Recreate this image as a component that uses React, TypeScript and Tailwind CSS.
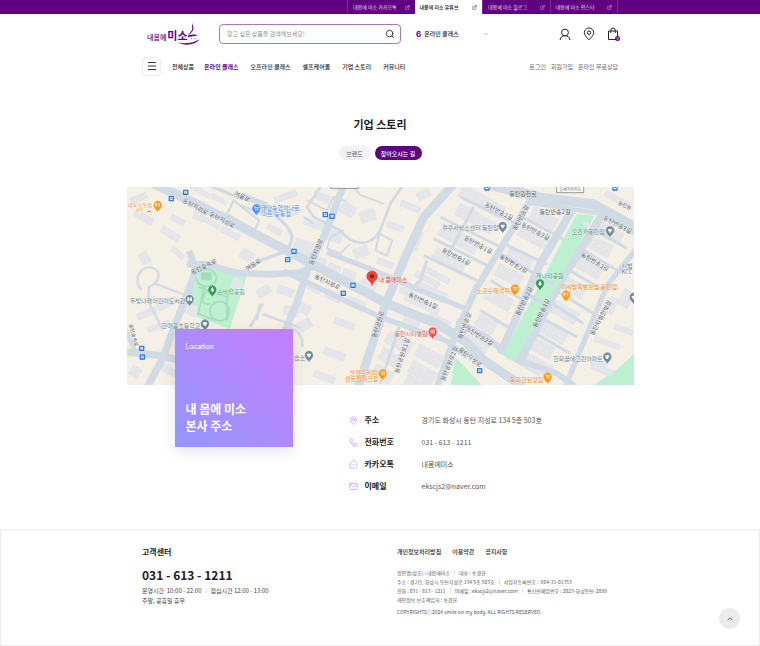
import type { ReactNode } from "react";
import { ChevronDown, ChevronUp, ExternalLink, Mail, MapPin, MessageCircleMore, Phone, Search } from "lucide-react";

const CHANNELS = [
  { label: "내몸에 미소 카카오톡", active: false },
  { label: "내몸에 미소 유튜브", active: true },
  { label: "내몸에 미소 블로그", active: false },
  { label: "내몸에 미소 인스타", active: false },
];

const MENU = ["온라인 클래스", "오프라인 클래스", "셀프케어몰", "기업 스토리", "커뮤니티"];

/* ---------- map data, 3 units per pixel ---------- */

const MAIN_ROADS: [string, number][] = [
  ["M60 -20L190 42L330 112L519 212L780 350L930 410L1014 462L1070 520L1190 600", 28],
  ["M186 192L196 216L188 232L240 232L330 258L430 262L520 256L556 240", 20],
  ["M212 236L172 344L130 450L112 504L56 610", 22],
  ["M-10 494L100 506L200 530L330 560", 22],
  ["M652 -10L590 150L548 230L512 340L430 540", 22],
  ["M990 -20L890 90L835 210L778 345L690 610", 26],
  ["M600 196L740 250L910 322L1014 364", 16],
  ["M470 252L640 334L770 394L960 462L1020 510", 16],
  ["M1075 -10L1240 32L1400 52L1540 130", 30],
  ["M1214 34L1140 154L1050 300L990 430L930 600", 20],
  ["M1334 72L1240 230L1120 500", 24],
  ["M1425 84L1300 284L1175 530", 24],
  ["M1214 48L1330 66L1425 80L1540 150", 14],
  ["M1540 170L1440 296L1310 610", 16],
  ["M990 400L1080 450L1150 510L1290 560L1360 610", 18],
];

const SIDE_ROADS: [string, number][] = [
  ["M44 310C10 270 50 230 80 244C110 260 90 290 66 300L64 344L108 430", 7],
  ["M84 290L174 324", 7],
  ["M240 -8L330 30C380 40 420 50 450 90C500 130 510 160 470 196L400 220L362 246", 10],
  ["M320 40L300 82L384 130L396 100Z", 7],
  ["M345 20L420 50L400 80L340 54", 7],
  ["M408 350L370 420M408 382L520 422M400 350L388 400", 8],
  ["M586 -8L540 60L560 90L640 130C680 180 730 180 760 130L790 50L830 -8", 8],
  ["M672 -8L700 24L770 50M650 130L610 150L600 184L640 200L670 170", 6],
  ["M756 140L796 160L780 206L746 190Z", 6],
  ["M540 40L600 70L620 30L660 44M530 90L560 110", 6],
  ["M-10 420L20 480L30 505", 14],
  ["M489 420C510 430 530 450 526 480", 8],
  ["M900 220L880 280L860 300", 10],
  ["M1000 30L1170 112M940 90L1120 180M920 155L1090 240M890 205L1050 280", 9],
  ["M1184 88L1310 158M1130 170L1260 232M1120 200L1240 270M1090 280L1190 340M1060 370L1150 425", 9],
  ["M1390 120L1500 184M1360 184L1470 250M1310 240L1430 310M1270 300L1400 380", 9],
  ["M1230 320L1370 410M1220 380L1350 450M1210 430L1330 500", 9],
  ["M1440 84L1530 140M820 410L760 590M930 440L1000 500M1040 60L960 210", 9],
];

// x, y, columns, rows of each block of houses
const HOUSES: [number, number, number, number][] = [
  [1010, -8, 7, 2], [1000, 48, 6, 2], [950, 108, 6, 2], [930, 180, 5, 2], [900, 238, 4, 1],
  [1224, 58, 4, 2], [1190, 110, 5, 2], [1150, 180, 4, 2], [1120, 228, 4, 2], [1090, 300, 4, 2],
  [1060, 380, 3, 2], [1420, 100, 4, 2], [1390, 140, 4, 2], [1360, 204, 4, 2], [1310, 262, 4, 2],
  [1270, 330, 5, 2], [1236, 390, 5, 2], [1214, 444, 4, 2], [1190, 490, 5, 2], [1440, 10, 4, 1],
  [870, 250, 4, 1], [790, 430, 4, 2], [770, 480, 3, 2], [750, 530, 3, 2], [880, 470, 4, 2],
  [860, 520, 4, 2], [845, 560, 4, 2], [1020, 430, 4, 2],
];

// x, y, width, height, rotation
const BLOCKS: [number, number, number, number, number][] = [
  [10, 24, 50, 18, -22], [20, 80, 60, 22, 30], [130, 90, 44, 18, 28], [200, 70, 34, 30, 20], [190, 6, 60, 14, 28],
  [230, 100, 50, 16, 28], [280, 130, 60, 18, 28], [100, 130, 60, 22, 32], [36, 200, 34, 26, 60], [130, 190, 46, 16, 40],
  [90, 340, 60, 20, -26], [30, 370, 60, 18, -24], [60, 410, 70, 16, -20], [10, 540, 30, 30, 30], [100, 540, 50, 20, 30],
  [390, 300, 40, 26, -30], [450, 300, 50, 24, 20], [470, 360, 44, 26, 10], [340, 190, 40, 30, 30], [420, 120, 44, 16, 28],
  [480, 60, 40, 24, -30], [440, 20, 70, 18, -20], [250, 30, 50, 14, 28], [530, 100, 60, 22, 20], [500, 160, 56, 40, 20],
  [560, 20, 50, 22, 20], [640, 50, 44, 34, 30], [700, 70, 44, 34, -20], [600, 130, 44, 34, 20], [680, 180, 44, 30, -20],
  [750, 220, 50, 18, 20], [780, 110, 50, 18, 20], [820, 50, 60, 18, 24], [850, 130, 30, 60, 20], [870, 10, 40, 24, -30],
  [560, 210, 36, 30, 24], [600, 232, 40, 30, 24], [644, 250, 40, 30, 24], [700, 280, 46, 30, 24], [540, 290, 44, 24, 24],
  [596, 314, 48, 26, 24], [656, 336, 60, 28, 24], [510, 350, 40, 28, 30], [510, 400, 44, 30, -30], [620, 400, 64, 20, 20],
  [590, 490, 66, 22, 20], [560, 560, 64, 20, 20], [820, 300, 40, 24, 24], [860, 300, 100, 30, 24], [830, 340, 110, 22, 24],
  [900, 390, 70, 26, 24], [830, 390, 50, 24, 24], [1160, 510, 90, 36, 30], [1010, 470, 50, 40, 30], [1400, 460, 80, 16, 20],
  [1460, 420, 60, 16, 20], [1390, 540, 70, 18, 20], [1480, 310, 34, 50, 30], [1440, 330, 26, 50, 26], [1390, 520, 50, 16, 20],
];

type Label = { x: number; y: number; t: string; r?: number; c?: string; s?: number };

const SLATE = "#6b8797";
const ORANGE = "#f08a17";

const LABELS: Label[] = [
  { x: 206, y: 58, t: "동탄지성로", r: 28 },
  { x: 286, y: 98, t: "동탄지성로", r: 28 },
  { x: 346, y: 28, t: "여울로", r: 26 },
  { x: 230, y: 238, t: "동탄숲속로", r: -26 },
  { x: 378, y: 232, t: "여울로", r: -34 },
  { x: 22, y: 444, t: "동탄숲속로", r: 74, s: 15 },
  { x: 566, y: 194, t: "동탄지성로", r: -68 },
  { x: 602, y: 284, t: "동탄지성로", r: 25 },
  { x: 888, y: 340, t: "동탄반송1길", r: 25 },
  { x: 752, y: 412, t: "동탄공원로", r: -72 },
  { x: 824, y: 506, t: "동탄공원로1길", r: -72 },
  { x: 966, y: 530, t: "동탄공원로2길", r: -68 },
  { x: 988, y: 208, t: "동탄반송1길", r: 27 },
  { x: 1188, y: 18, t: "동탄원천로" },
  { x: 1116, y: 72, t: "동탄반송1길", r: 28 },
  { x: 1054, y: 172, t: "동탄반송1길", r: 28 },
  { x: 1180, y: 92, t: "동탄반송길", r: -62 },
  { x: 1284, y: 74, t: "동탄반송2길" },
  { x: 1226, y: 132, t: "동탄반송2길", r: 28 },
  { x: 1160, y: 230, t: "동탄반송2길", r: 30 },
  { x: 1472, y: 112, t: "동탄반송3길", r: 28 },
  { x: 1404, y: 224, t: "동탄반송3길", r: 30 },
  { x: 1190, y: 342, t: "동탄반송2길", r: -64 },
  { x: 1242, y: 378, t: "동탄반송3길", r: -64 },
  { x: 1420, y: 392, t: "동탄지범한빛길", r: -62 },
  { x: 1058, y: 446, t: "동탄반송2길", r: 32 },
  { x: 1012, y: 416, t: "동탄반송길", r: -70 },
  { x: 1030, y: 510, t: "동탄지성로", r: 38 },
  { x: 1494, y: 54, t: "동탄원", r: 24, s: 15 },
  { x: 39, y: 53, t: "대국 능동점", c: ORANGE, s: 15 },
  { x: 50, y: 70, t: "한식 · ▬", c: ORANGE, s: 12 },
  { x: 460, y: 60, t: "태안농협하나로", c: "#4b86ee" },
  { x: 448, y: 78, t: "마트 능동점", c: "#4b86ee" },
  { x: 312, y: 312, t: "손바닥공원", c: "#5c9f74" },
  { x: 92, y: 341, t: "두빛나래어린이도서관", c: SLATE },
  { x: 162, y: 416, t: "한마음초등학교", c: SLATE },
  { x: 510, y: 510, t: "휴습소", c: SLATE },
  { x: 798, y: 277, t: "내 몸에미소", c: "#e53935" },
  { x: 852, y: 438, t: "동탄시티병원", c: "#e8564e" },
  { x: 710, y: 557, t: "블렌드커피", c: ORANGE },
  { x: 704, y: 574, t: "센트럴파크점", c: ORANGE },
  { x: 1030, y: 121, t: "쿠쿠서비스센터 동탄점", c: SLATE },
  { x: 1384, y: 134, t: "오즈카동탄점", c: SLATE },
  { x: 1268, y: 264, t: "개나리공원", c: "#40966a" },
  { x: 1099, y: 311, t: "노곤수제맥주", c: ORANGE },
  { x: 1386, y: 298, t: "이서방족발보쌈 동탄점", c: ORANGE },
  { x: 1353, y: 514, t: "한화꿈에그린아파트", c: SLATE },
  { x: 1199, y: 576, t: "육회한된장집", c: ORANGE },
  { x: 1500, y: 234, t: "시범", c: SLATE },
  { x: 1500, y: 252, t: "KCC", c: SLATE },
];

type Glyph = "food" | "cart" | "tree" | "dot" | "book" | "hospital";

const PINS: { x: number; y: number; c: string; g: Glyph }[] = [
  { x: 92, y: 56, c: "#f79a1c", g: "food" },
  { x: 388, y: 66, c: "#5491f5", g: "cart" },
  { x: 256, y: 310, c: "#2e9e52", g: "tree" },
  { x: 188, y: 338, c: "#718b9b", g: "book" },
  { x: 234, y: 412, c: "#718b9b", g: "dot" },
  { x: 546, y: 506, c: "#718b9b", g: "dot" },
  { x: 767, y: 561, c: "#f79a1c", g: "cart" },
  { x: 917, y: 436, c: "#ea4b43", g: "hospital" },
  { x: 1127, y: 119, c: "#718b9b", g: "dot" },
  { x: 1449, y: 132, c: "#718b9b", g: "dot" },
  { x: 1239, y: 291, c: "#2e9e52", g: "tree" },
  { x: 1164, y: 307, c: "#f79a1c", g: "cart" },
  { x: 1317, y: 325, c: "#f79a1c", g: "food" },
  { x: 1441, y: 511, c: "#718b9b", g: "dot" },
  { x: 1262, y: 571, c: "#f79a1c", g: "cart" },
  { x: 1520, y: 332, c: "#718b9b", g: "dot" },
];

const BUS_STOPS = [
  [133, 35], [176, 16], [501, 193], [482, 218], [595, 83], [615, 88], [678, 295], [649, 319],
  [44, 484], [46, 510], [1058, 551], [1080, 3], [1464, 3],
];

const GLYPHS: Record<Glyph, ReactNode> = {
  food: <path d="M-5 -6V6M-2 -6V-1H-7V-6M4 -6V6M4 -6C8 -4 7 1 4 1" stroke="#fff" strokeWidth={2} fill="none" />,
  cart: <path d="M-7 -5H-4L-2 3H5L7 -3H-3M-2 7h1M4 7h1" stroke="#fff" strokeWidth={2} fill="none" />,
  tree: <path d="M0 -8L5 1H3L6 5H-6L-3 1H-5ZM-1 5H1V8H-1Z" fill="#fff" />,
  dot: <path d="M-6 -4H6V0C4 3 2 4 2 7H-2C-2 4 -4 3 -6 0Z" fill="#fff" />,
  book: <path d="M-7 -5L-1 -4V6L-7 5ZM7 -5L1 -4V6L7 5Z" fill="#fff" />,
  hospital: <path d="M-5 -5H5V5H-5ZM0 -3V3M-3 0H3" stroke="#fff" strokeWidth={2} fill="none" />,
};

function LocationMap() {
  return (
    <svg
      viewBox="0 0 1521 594"
      preserveAspectRatio="xMidYMid slice"
      className="block h-[198px] w-full bg-[#f5f0e5] font-['Noto_Sans_CJK_KR',sans-serif]"
      role="img"
      aria-label="내 몸에 미소 지도"
    >
      {/* Parks */}
      <g fill="#bdf0d0">
        <path d="M225 238L360 266L308 426L168 374Z" />
        <path d="M985 510L1070 600H970Z" />
        <path d="M1521 500L1470 548L1400 594H1521Z" />
      </g>
      <g fill="none" stroke="#a5ddba" strokeWidth={5}>
        <ellipse cx="238" cy="272" rx="30" ry="26" />
        <circle cx="278" cy="372" r="29" />
        <path d="M214 300L300 330L320 290M230 300L214 380L262 400M262 300C220 310 216 360 250 350M300 330V400" />
      </g>
      <path d="M222 256h32v24h-32z" fill="#a5ddba" />
      <path d="M318 270l32 12l-10 32l-30 -12zM176 344l36 14l-6 36l-36 -18z" fill="#e4e6ec" />

      {/* Buildings */}
      <g fill="#e4e6eb" stroke="#d6dae2" strokeWidth={1}>
        {BLOCKS.map(([x, y, w, h, r], i) => (
          <rect key={i} x={x} y={y} width={w} height={h} transform={`rotate(${r} ${x + w / 2} ${y + h / 2})`} />
        ))}
        {HOUSES.map(([x, y, cols, rows], i) => (
          <g key={i} transform={`translate(${x} ${y}) rotate(29)`}>
            {Array.from({ length: cols * rows }, (_, n) => (
              <rect key={n} x={(n % cols) * 21} y={Math.floor(n / cols) * 21} width={18} height={18} rx={2} />
            ))}
          </g>
        ))}
      </g>

      {/* Roads */}
      <g fill="none" stroke="#d1dbe5" strokeLinejoin="round">
        {SIDE_ROADS.map(([d, w]) => <path key={d} d={d} strokeWidth={w} />)}
        {MAIN_ROADS.map(([d, w]) => <path key={d} d={d} strokeWidth={w} />)}
      </g>
      <path d="M1349 80L1402 86L1164 526L1127 502Z" fill="#bdf0d0" />
      <path d="M1206 324L1250 350M1250 276L1280 292" stroke="#d1dbe5" strokeWidth={12} />
      <rect x="1368" y="104" width="18" height="16" rx="4" fill="#e4e6eb" />

      {/* Road signs cut by the top edge */}
      <g fill="#fff" stroke="#5f6670" strokeWidth={2}>
        <path d="M611 -6H694V4H611ZM1289 -6H1370V17H1289Z" />
      </g>
      <text x="1330" y="13" fontSize={12} textAnchor="middle" fill="#56606b">일세지하차도</text>

      {LABELS.map(({ x, y, t, r = 0, c = "#4f5b69", s = 18 }, i) => (
        <text
          key={i}
          x={x}
          y={y}
          fontSize={s}
          fill={c}
          stroke="#fff"
          strokeWidth={2}
          strokeOpacity={0.6}
          paintOrder="stroke"
          textAnchor="middle"
          dominantBaseline="central"
          transform={`rotate(${r} ${x} ${y})`}
        >
          {t}
        </text>
      ))}

      {BUS_STOPS.map(([x, y]) => (
        <g key={`${x}-${y}`} transform={`translate(${x} ${y})`}>
          <rect x={-8} y={-8} width={16} height={16} rx={2} fill="#1d72e8" />
          <path d="M-4 -4H4V3H-4ZM-3 3V5M3 3V5" fill="#fff" stroke="#fff" strokeWidth={1} />
          <path d="M-3 -2H3V0H-3Z" fill="#1d72e8" />
        </g>
      ))}

      {PINS.map(({ x, y, c, g }) => (
        <g key={`${x}-${y}`} transform={`translate(${x} ${y})`}>
          <path d="M0 21C-2 13 -13 9 -13 -2A13 13 0 0 1 13 -2C13 9 2 13 0 21Z" fill={c} stroke="#fff" strokeWidth={1} />
          <g transform="translate(0 -2)">{GLYPHS[g]}</g>
        </g>
      ))}

      {/* Our office */}
      <path d="M735 297C732 280 719 282 719 268A16 16 0 0 1 751 268C751 282 738 280 735 297Z" fill="#ea4335" stroke="#c5221f" strokeWidth={1} />
      <circle cx="735" cy="268" r="6" fill="#8c1a14" />
    </svg>
  );
}

function Logo() {
  return (
    <a href="#" className="ml-[5px] flex h-6 w-[53px] items-center text-[#5f0080]" aria-label="내몸에 미소">
      <svg viewBox="0 0 159 72" className="h-6 w-[53px] font-['Noto_Sans_CJK_KR',sans-serif]" fill="currentColor">
        <text x="0" y="54" fontSize={21} fontWeight={500}>내몸에</text>
        <text x="61" y="54" fontSize={33} fontWeight={700}>미소</text>
        <path d="M137 2C134 10 142 14 139 22C136 30 130 36 124 41C134 37 145 35 152 42C143 40 135 43 124 46C119 43 130 32 135 23C138 16 132 11 137 2Z" />
        <path d="M92 61C114 68 142 62 158 52C146 69 112 73 92 61Z" />
        <path d="M132 51l4 -2M142 51l4 -2" stroke="currentColor" strokeWidth={2} />
      </svg>
    </a>
  );
}

function Header() {
  return (
    <header>
      <div className="bg-[#5f0080]">
        <div className="mx-auto flex w-full max-w-[476px] justify-end">
          <nav className="grid h-[14px] w-[271px] grid-cols-4 border-r border-[#7b2c96] text-[5px]">
            {CHANNELS.map(({ label, active }) => (
              <a
                key={label}
                href="#"
                className={
                  active
                    ? "flex items-center justify-between bg-white px-[5px] font-medium text-[#222]"
                    : "flex items-center justify-between border-l border-[#7b2c96] px-[5px] text-[#eee0f3]"
                }
              >
                {label}
                <ExternalLink className="size-[5px]" />
              </a>
            ))}
          </nav>
        </div>
      </div>

      <div className="mx-auto flex h-[39px] w-full max-w-[476px] items-center">
        <Logo />
        <form className="ml-[19px] flex h-5 w-[182px] items-center rounded-[4px] border border-[#a877bb] px-[7px]">
          <input
            type="text"
            aria-label="상품 검색"
            placeholder="찾고 싶은 상품을 검색해보세요!"
            className="min-w-0 flex-1 text-[6px] outline-none placeholder:text-[#8f8f8f]"
          />
          <button type="button" aria-label="검색" className="-mr-[2px]">
            <Search className="size-[10px] text-[#222]" strokeWidth={2} />
          </button>
        </form>
        <button type="button" className="ml-[15px] flex w-[73px] items-center gap-[3px] text-[6px] font-medium text-[#222]">
          <span className="font-['Inter',sans-serif] text-[8px] leading-[10px] font-bold text-[#5f0080]">6</span>
          온라인 클래스
          <ChevronDown className="ml-auto size-[6px] text-[#777]" />
        </button>
        <div className="ml-auto flex items-center gap-3 text-[#222]">
          <a href="#" aria-label="마이페이지">
            <svg viewBox="0 0 12 14" className="h-[14px] w-3" fill="none" stroke="currentColor">
              <circle cx="6" cy="5.5" r="3.4" />
              <path d="M1 13C1.5 10 3.5 8.7 6 8.7S10.500 10 11 13" />
            </svg>
          </a>
          <a href="#" aria-label="매장 찾기">
            <svg viewBox="0 0 12 14" className="h-[14px] w-3" fill="none" stroke="currentColor">
              <path d="M6 12.800C3 9.800 1.300 7.800 1.300 5.700A4.700 4.700 0 0 1 10.700 5.700C10.700 7.800 9 9.800 6 12.800Z" />
              <circle cx="6" cy="5.700" r="1.700" />
            </svg>
          </a>
          <a href="#" aria-label="장바구니" className="relative -mr-[2px]">
            <svg viewBox="0 0 13 14" className="h-[14px] w-[13px]" fill="none" stroke="currentColor">
              <path d="M1.500 4H10.500V12.500H1.500ZM3.800 6V3.200A2.200 2.200 0 0 1 8.200 3.200V6" />
            </svg>
            <span className="absolute right-0 bottom-0 flex size-[5px] items-center justify-center rounded-full bg-[#5f0080] text-[4px] leading-none text-white">0</span>
          </a>
        </div>
      </div>

      <div className="mx-auto flex h-[26px] w-full max-w-[476px] items-center">
        <button type="button" aria-label="전체 메뉴" className="flex size-[19px] items-center justify-center rounded-[4px] border border-[#ececec]">
          <svg viewBox="0 0 8 8" className="size-2" stroke="#333">
            <path d="M0 .5H8M0 4H8M0 7.500H8" />
          </svg>
        </button>
        <a href="#" className="mr-[10px] ml-[11px] text-[6px] font-medium text-[#222]">전체상품</a>
        <nav className="flex gap-3 text-[6px] font-medium text-[#222]">
          {MENU.map((item, i) => (
            <a key={item} href="#" className={i === 0 ? "font-bold text-[#5f0080]" : ""}>{item}</a>
          ))}
        </nav>
        <div className="ml-auto flex gap-[5px] text-[6px] text-[#666]">
          <a href="#">로그인</a>
          <a href="#">회원가입</a>
          <a href="#">온라인 무료상담</a>
        </div>
      </div>
    </header>
  );
}

const CONTACTS = [
  { icon: MapPin, label: "주소", value: "경기도 화성시 동탄 지성로 134 5층 503호" },
  { icon: Phone, label: "전화번호", value: "031 - 613 - 1211" },
  { icon: MessageCircleMore, label: "카카오톡", value: "내몸에미소" },
  { icon: Mail, label: "이메일", value: "ekscjs2@naver.com" },
];

function Story() {
  return (
    <main>
      <h1 className="pt-9 text-center text-[11px] leading-[18px] font-bold text-[#222]">기업 스토리</h1>
      <div className="mt-[13px] flex justify-center gap-1">
        <button type="button" className="h-[14px] w-8 rounded-full bg-[#f2f2f4] text-[6px] text-[#555]">브랜드</button>
        <button type="button" className="h-[14px] w-[47px] rounded-full bg-[#5f0080] text-[6px] font-medium text-white">찾아오시는 길</button>
      </div>

      <section className="mx-auto mt-[27px] w-full max-w-[507px]">
        <LocationMap />
        <div className="flex pl-12">
          <div className="relative -mt-14 flex h-[118px] w-[118px] shrink-0 flex-col justify-between bg-linear-to-tr from-[#9296fd] to-[#c47dfc] px-[11px] pt-[13px] pb-[13px] text-white shadow-[0_5px_14px_rgba(0,0,0,0.1)]">
            <span className="font-['Inter',sans-serif] text-[7px] leading-[10px]">Location</span>
            <h2 className="text-[12px] leading-[17px] font-bold">내 몸에 미소<br />본사 주소</h2>
          </div>
          <dl className="mt-6 ml-[56px] text-[#555]">
            {CONTACTS.map(({ icon: Icon, label, value }) => (
              <div key={label} className="flex h-[22px] items-center">
                <Icon className="size-[9px] text-[#c99bf7]" strokeWidth={2} />
                <dt className="ml-[7px] w-[57px] text-[8px] font-bold text-[#222]">{label}</dt>
                <dd className="text-[7px]">{value}</dd>
              </div>
            ))}
          </dl>
        </div>
      </section>
    </main>
  );
}

function Bar() {
  return <span className="mx-[4px] inline-block h-[5px] w-px bg-[#ddd]" aria-hidden />;
}

function Footer() {
  return (
    <footer className="mt-8 border border-[#ececec]">
      <div className="mx-auto flex h-[115px] w-full max-w-[476px] pt-4">
        <div className="w-[255px] text-[#222]">
          <h3 className="text-[8px] leading-[12px] font-bold">고객센터</h3>
          <p className="mt-2 text-[12px] leading-[18px] font-bold">031 - 613 - 1211</p>
          <p className="mt-[2px] text-[6px] leading-[10px] text-[#444]">운영시간&nbsp; 10:00 - 22:00<Bar />점심시간 12:00 - 13:00</p>
          <p className="text-[6px] leading-[10px] text-[#444]">주말, 공휴일 휴무</p>
        </div>
        <div className="text-[5px] leading-[9px] text-[#555]">
          <div className="flex gap-[11px] text-[6px] leading-[12px] font-medium text-[#222]">
            <a href="#">개인정보처리방침</a>
            <a href="#">이용약관</a>
            <a href="#">공지사항</a>
          </div>
          <p className="mt-[10px]">법인명(상호) : 내몸에미소<Bar />대표 : 송경헌</p>
          <p>주소 : 경기도 화성시 동탄지성로 134 5층 503호<Bar />사업자등록번호 :&nbsp; 864-31-01353</p>
          <p>전화 : 031 - 613 - 1211<Bar />이메일 : ekscjs2@naver.com<Bar />통신판매업번호 : 2023-화성동탄-2899</p>
          <p>개인정보 보호책임자 : 송경헌</p>
          <p className="mt-[3px]">COPYRIGHTSⓒ2024 smile on my body. ALL RIGHTS RESERVED.</p>
        </div>
      </div>
    </footer>
  );
}

export default function App() {
  return (
    <div className="bg-white font-['Noto_Sans_CJK_KR',sans-serif]">
      <Header />
      <Story />
      <Footer />
      <button type="button" aria-label="맨 위로" className="fixed right-5 bottom-[17px] flex size-[21px] items-center justify-center rounded-full bg-[#ebebeb]">
        <ChevronUp className="size-2 text-[#333]" strokeWidth={2} />
      </button>
    </div>
  );
}
